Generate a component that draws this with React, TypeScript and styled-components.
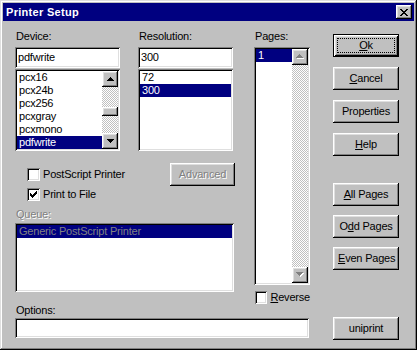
import React from 'react';
import styled, { createGlobalStyle, css } from 'styled-components';

const Global = createGlobalStyle`
  html, body { margin: 0; padding: 0; background: #c0c0c0; }
  body { font-family: "Liberation Sans", Arial, sans-serif; font-size: 11px; color: #000; }
  * { box-sizing: border-box; }
`;

const raised = css`
  box-shadow: inset -1px -1px #000, inset 1px 1px #fff, inset -2px -2px #808080, inset 2px 2px #dfdfdf;
`;
const sunken = css`
  box-shadow: inset 1px 1px #808080, inset -1px -1px #fff, inset 2px 2px #000, inset -2px -2px #dfdfdf;
`;

const Window = styled.div`
  width: 417px;
  height: 350px;
  padding: 3px;
  background: #c0c0c0;
  box-shadow: inset -1px -1px #000, inset 1px 1px #dfdfdf, inset -2px -2px #808080, inset 2px 2px #fff;
  display: flex;
  flex-direction: column;
`;

const TitleBar = styled.div`
  height: 18px;
  background: #000080;
  display: flex;
  align-items: center;
  justify-content: space-between;
  padding: 0 2px 0 3px;
`;

const Title = styled.span`
  color: #fff;
  font-weight: bold;
  font-size: 11px;
  letter-spacing: 0.3px;
  line-height: 18px;
`;

const CloseButton = styled.div`
  width: 16px;
  height: 14px;
  ${raised};
  background: #c0c0c0;
  display: flex;
  align-items: center;
  justify-content: center;
  padding-right: 1px;
`;

const Body = styled.div`
  flex: 1;
  display: flex;
  flex-direction: row;
  align-items: flex-start;
`;

const MainCol = styled.div`
  width: 295px;
  margin-left: 12px;
  padding-top: 9px;
  display: flex;
  flex-direction: column;
`;

const Upper = styled.div`
  display: flex;
  flex-direction: row;
  align-items: flex-start;
`;

const LeftBlock = styled.div`
  width: 221px;
  display: flex;
  flex-direction: column;
`;

const FieldsRow = styled.div`
  display: flex;
  flex-direction: row;
  gap: 18px;
`;

const Field = styled.div<{ $w: number }>`
  width: ${(p) => p.$w}px;
  display: flex;
  flex-direction: column;
`;

const Label = styled.div<{ $disabled?: boolean; $mt?: number }>`
  height: 13px;
  line-height: 13px;
  padding-left: 1px;
  letter-spacing: -0.2px;
  margin-top: ${(p) => p.$mt ?? 0}px;
  white-space: nowrap;
  ${(p) =>
    p.$disabled &&
    css`
      color: #808080;
      text-shadow: 1px 1px #fff;
    `}
`;

const TextInput = styled.div<{ $h: number; $mt: number }>`
  height: ${(p) => p.$h}px;
  margin-top: ${(p) => p.$mt}px;
  background: #fff;
  ${sunken};
  padding: 2px 2px 2px 3px;
  line-height: ${(p) => p.$h - 4}px;
  letter-spacing: -0.2px;
  white-space: nowrap;
`;

const ListBox = styled.div<{ $h: number; $mt: number; $w?: number }>`
  height: ${(p) => p.$h}px;
  margin-top: ${(p) => p.$mt}px;
  ${(p) => (p.$w ? `width: ${p.$w}px;` : '')}
  background: #fff;
  ${sunken};
  padding: 2px;
  display: flex;
  flex-direction: row;
`;

const Items = styled.div`
  flex: 1;
  display: flex;
  flex-direction: column;
  min-width: 0;
`;

const Item = styled.div<{ $selected?: boolean; $disabled?: boolean }>`
  height: 13px;
  line-height: 13px;
  padding-left: 2px;
  letter-spacing: -0.2px;
  white-space: nowrap;
  background: ${(p) => (p.$selected ? '#000080' : 'transparent')};
  color: ${(p) => (p.$disabled ? '#808080' : p.$selected ? '#fff' : '#000')};
`;

const ScrollBar = styled.div`
  width: 16px;
  display: flex;
  flex-direction: column;
`;

const ScrollBtn = styled.div`
  width: 16px;
  height: 16px;
  ${raised};
  background: #c0c0c0;
  display: flex;
  align-items: center;
  justify-content: center;
  padding-bottom: 1px;
`;

const Track = styled.div`
  flex: 1;
  background: repeating-conic-gradient(#c0c0c0 0% 25%, #fff 0% 50%) 0 0 / 2px 2px;
  display: flex;
  flex-direction: column;
`;

const Thumb = styled.div<{ $offset: number }>`
  height: 9px;
  margin-top: ${(p) => p.$offset}px;
  background: #c0c0c0;
  ${raised};
`;

const OptionsRow = styled.div`
  margin-top: 12px;
  display: flex;
  flex-direction: row;
  align-items: flex-start;
  justify-content: space-between;
`;

const CheckCol = styled.div`
  margin-left: 12px;
  padding-top: 5px;
  display: flex;
  flex-direction: column;
  gap: 7px;
`;

const CheckRow = styled.div<{ $ml?: number }>`
  display: flex;
  flex-direction: row;
  align-items: center;
  gap: 3px;
  height: 13px;
  margin-left: ${(p) => p.$ml ?? 0}px;
  line-height: 13px;
  letter-spacing: -0.2px;
  white-space: nowrap;
`;

const CheckBox = styled.div`
  width: 13px;
  height: 13px;
  background: #fff;
  ${sunken};
  display: flex;
  align-items: center;
  justify-content: center;
`;

const PagesBlock = styled.div`
  width: 56px;
  margin-left: 19px;
  display: flex;
  flex-direction: column;
`;

const ButtonCol = styled.div`
  width: 66px;
  margin-left: 23px;
  padding-top: 13px;
  display: flex;
  flex-direction: column;
`;

const ButtonGroup = styled.div<{ $gap: number; $mt: number }>`
  display: flex;
  flex-direction: column;
  gap: ${(p) => p.$gap}px;
  margin-top: ${(p) => p.$mt}px;
`;

const Button = styled.div<{ $default?: boolean; $w?: number; $disabled?: boolean }>`
  width: ${(p) => p.$w ?? 66}px;
  height: 23px;
  background: #c0c0c0;
  display: flex;
  padding: 4px;
  ${(p) =>
    p.$default
      ? css`
          box-shadow: inset 1px 1px #000, inset -1px -1px #000, inset 2px 2px #fff, inset -2px -2px #000,
            inset 3px 3px #dfdfdf, inset -3px -3px #808080;
        `
      : raised};
  ${(p) =>
    p.$disabled &&
    css`
      color: #808080;
      text-shadow: 1px 1px #fff;
    `}
`;

const ButtonLabel = styled.span<{ $focus?: boolean }>`
  flex: 1;
  display: flex;
  align-items: center;
  justify-content: center;
  line-height: 13px;
  letter-spacing: -0.2px;
  white-space: nowrap;
  border: 1px ${(p) => (p.$focus ? 'dotted #000' : 'solid transparent')};
  padding-bottom: 1px;
`;

const OptionsInput = styled(TextInput)`
  width: 294px;
`;

const U = styled.u`
  text-decoration-thickness: 1px;
  text-underline-offset: 1px;
`;

type GlyphProps = { rows: string[]; color: string; shadow?: boolean };

const PixelGlyph = ({ rows, color, shadow }: GlyphProps) => {
  const pts: { x: number; y: number }[] = [];
  rows.forEach((r, y) =>
    r.split('').forEach((c, x) => {
      if (c === '#') pts.push({ x, y });
    })
  );
  const w = rows[0].length + (shadow ? 1 : 0);
  const h = rows.length + (shadow ? 1 : 0);
  return (
    <svg width={w} height={h} shapeRendering="crispEdges" style={{ display: 'block' }}>
      {shadow && pts.map((p, i) => <rect key={'s' + i} x={p.x + 1} y={p.y + 1} width={1} height={1} fill="#fff" />)}
      {pts.map((p, i) => (
        <rect key={i} x={p.x} y={p.y} width={1} height={1} fill={color} />
      ))}
    </svg>
  );
};

const UP = ['...#...', '..###..', '.#####.', '#######'];
const DOWN = ['#######', '.#####.', '..###..', '...#...'];
const CLOSE = ['##....##', '.##..##.', '..####..', '...##...', '..####..', '.##..##.', '##....##'];
const CHECK = ['......#', '.....##', '#...###', '##.###.', '#####..', '.###...', '..#....'];

const Arrow = ({ dir, disabled }: { dir: 'up' | 'down'; disabled?: boolean }) => (
  <PixelGlyph rows={dir === 'up' ? UP : DOWN} color={disabled ? '#808080' : '#000'} shadow={disabled} />
);

const Check = ({ checked }: { checked?: boolean }) => (
  <CheckBox>{checked && <PixelGlyph rows={CHECK} color="#000" />}</CheckBox>
);

export default function App() {
  return (
    <>
      <Global />
      <Window>
        <TitleBar>
          <Title>Printer Setup</Title>
          <CloseButton>
            <PixelGlyph rows={CLOSE} color="#000" />
          </CloseButton>
        </TitleBar>
        <Body>
          <MainCol>
            <Upper>
              <LeftBlock>
                <FieldsRow>
                  <Field $w={105}>
                    <Label>Device:</Label>
                    <TextInput $h={21} $mt={4}>pdfwrite</TextInput>
                    <ListBox $h={82} $mt={1}>
                      <Items>
                        <Item>pcx16</Item>
                        <Item>pcx24b</Item>
                        <Item>pcx256</Item>
                        <Item>pcxgray</Item>
                        <Item>pcxmono</Item>
                        <Item $selected>pdfwrite</Item>
                      </Items>
                      <ScrollBar>
                        <ScrollBtn>
                          <Arrow dir="up" />
                        </ScrollBtn>
                        <Track>
                          <Thumb $offset={20} />
                        </Track>
                        <ScrollBtn>
                          <Arrow dir="down" />
                        </ScrollBtn>
                      </ScrollBar>
                    </ListBox>
                  </Field>
                  <Field $w={95}>
                    <Label>Resolution:</Label>
                    <TextInput $h={21} $mt={4}>300</TextInput>
                    <ListBox $h={82} $mt={1}>
                      <Items>
                        <Item>72</Item>
                        <Item $selected>300</Item>
                      </Items>
                    </ListBox>
                  </Field>
                </FieldsRow>
                <OptionsRow>
                  <CheckCol>
                    <CheckRow>
                      <Check />
                      <span>PostScript Printer</span>
                    </CheckRow>
                    <CheckRow>
                      <Check checked />
                      <span>Print to File</span>
                    </CheckRow>
                  </CheckCol>
                  <Button $w={65} $disabled>
                    <ButtonLabel>Advanced</ButtonLabel>
                  </Button>
                </OptionsRow>
                <Label $disabled $mt={7}>
                  Queue:
                </Label>
                <ListBox $h={69} $mt={2} $w={219}>
                  <Items>
                    <Item $selected $disabled>
                      Generic PostScript Printer
                    </Item>
                  </Items>
                </ListBox>
              </LeftBlock>
              <PagesBlock>
                <Label>Pages:</Label>
                <ListBox $h={238} $mt={4}>
                  <Items>
                    <Item $selected>1</Item>
                  </Items>
                  <ScrollBar>
                    <ScrollBtn>
                      <Arrow dir="up" disabled />
                    </ScrollBtn>
                    <Track />
                    <ScrollBtn>
                      <Arrow dir="down" disabled />
                    </ScrollBtn>
                  </ScrollBar>
                </ListBox>
                <CheckRow $ml={1} style={{ marginTop: 6 }}>
                  <Check />
                  <span>
                    <U>R</U>everse
                  </span>
                </CheckRow>
              </PagesBlock>
            </Upper>
            <Label>Options:</Label>
            <OptionsInput $h={20} $mt={1} />
          </MainCol>
          <ButtonCol>
            <ButtonGroup $gap={10} $mt={0}>
              <Button $default>
                <ButtonLabel $focus>
                  <U>O</U>k
                </ButtonLabel>
              </Button>
              <Button>
                <ButtonLabel>
                  <U>C</U>ancel
                </ButtonLabel>
              </Button>
              <Button>
                <ButtonLabel>Properties</ButtonLabel>
              </Button>
              <Button>
                <ButtonLabel>
                  <U>H</U>elp
                </ButtonLabel>
              </Button>
            </ButtonGroup>
            <ButtonGroup $gap={9} $mt={27}>
              <Button>
                <ButtonLabel>
                  <U>A</U>ll Pages
                </ButtonLabel>
              </Button>
              <Button>
                <ButtonLabel>
                  O<U>d</U>d Pages
                </ButtonLabel>
              </Button>
              <Button>
                <ButtonLabel>
                  <U>E</U>ven Pages
                </ButtonLabel>
              </Button>
            </ButtonGroup>
            <ButtonGroup $gap={0} $mt={47}>
              <Button>
                <ButtonLabel>uniprint</ButtonLabel>
              </Button>
            </ButtonGroup>
          </ButtonCol>
        </Body>
      </Window>
    </>
  );
}
